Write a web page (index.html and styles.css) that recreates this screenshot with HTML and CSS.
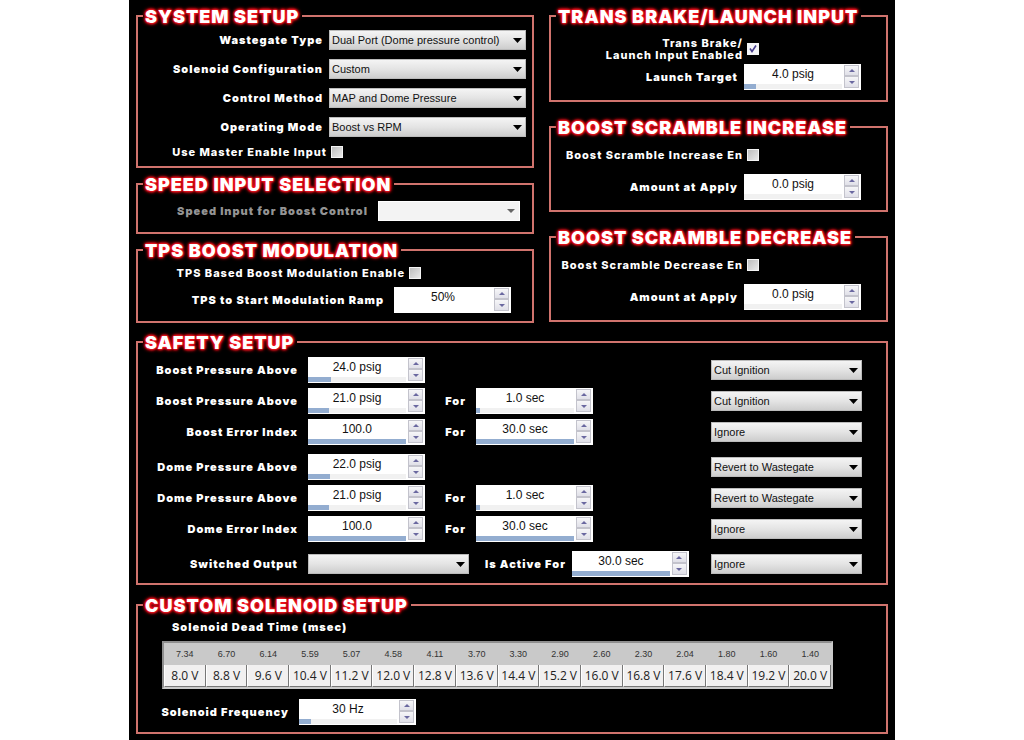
FILE: index.html
```html
<!DOCTYPE html>
<html lang="en">
<head>
  <meta charset="UTF-8">
  <meta name="viewport" content="width=device-width, initial-scale=1.0">
  <title>Boost Control Setup</title>
  <link rel="stylesheet" href="styles.css">
</head>
<body>

<main class="panel">
  <div class="columns">

    <div class="column column-left">
      <!-- System setup -->
      <fieldset class="group system">
        <legend>SYSTEM SETUP</legend>
        <div class="row">
          <label for="wastegate">Wastegate Type</label>
          <select id="wastegate"><option>Dual Port (Dome pressure control)</option></select>
        </div>
        <div class="row">
          <label for="solenoid">Solenoid Configuration</label>
          <select id="solenoid"><option>Custom</option></select>
        </div>
        <div class="row">
          <label for="method">Control Method</label>
          <select id="method"><option>MAP and Dome Pressure</option></select>
        </div>
        <div class="row">
          <label for="mode">Operating Mode</label>
          <select id="mode"><option>Boost vs RPM</option></select>
        </div>
        <div class="row check-row">
          <label for="master">Use Master Enable Input</label>
          <input type="checkbox" id="master">
        </div>
      </fieldset>

      <!-- Speed input -->
      <fieldset class="group speed">
        <legend>SPEED INPUT SELECTION</legend>
        <div class="row">
          <label for="speed">Speed Input for Boost Control</label>
          <select id="speed" disabled><option></option></select>
        </div>
      </fieldset>

      <!-- TPS -->
      <fieldset class="group tps">
        <legend>TPS BOOST MODULATION</legend>
        <div class="row check-row">
          <label for="tps-enable">TPS Based Boost Modulation Enable</label>
          <input type="checkbox" id="tps-enable">
        </div>
        <div class="row">
          <label for="tps-start">TPS to Start Modulation Ramp</label>
          <div class="spinner">
            <input type="text" id="tps-start" value="50%">
            <button type="button" class="up" aria-label="Increase"></button>
            <button type="button" class="down" aria-label="Decrease"></button>
          </div>
        </div>
      </fieldset>
    </div>

    <div class="column column-right">
      <!-- Trans brake / launch -->
      <fieldset class="group trans">
        <legend>TRANS BRAKE/LAUNCH INPUT</legend>
        <div class="row check-row">
          <label for="trans-enable">Trans Brake/<br>Launch Input Enabled</label>
          <input type="checkbox" id="trans-enable" checked>
        </div>
        <div class="row">
          <label for="launch">Launch Target</label>
          <div class="spinner">
            <input type="text" id="launch" value="4.0 psig">
            <span class="track"><span class="fill" style="width: 12%"></span></span>
            <button type="button" class="up" aria-label="Increase"></button>
            <button type="button" class="down" aria-label="Decrease"></button>
          </div>
        </div>
      </fieldset>

      <!-- Scramble increase -->
      <fieldset class="group scramble">
        <legend>BOOST SCRAMBLE INCREASE</legend>
        <div class="row check-row">
          <label for="inc-enable">Boost Scramble Increase En</label>
          <input type="checkbox" id="inc-enable">
        </div>
        <div class="row">
          <label for="inc-amount">Amount at Apply</label>
          <div class="spinner">
            <input type="text" id="inc-amount" value="0.0 psig">
            <span class="track"></span>
            <button type="button" class="up" aria-label="Increase"></button>
            <button type="button" class="down" aria-label="Decrease"></button>
          </div>
        </div>
      </fieldset>

      <!-- Scramble decrease -->
      <fieldset class="group scramble">
        <legend>BOOST SCRAMBLE DECREASE</legend>
        <div class="row check-row">
          <label for="dec-enable">Boost Scramble Decrease En</label>
          <input type="checkbox" id="dec-enable">
        </div>
        <div class="row">
          <label for="dec-amount">Amount at Apply</label>
          <div class="spinner">
            <input type="text" id="dec-amount" value="0.0 psig">
            <span class="track"></span>
            <button type="button" class="up" aria-label="Increase"></button>
            <button type="button" class="down" aria-label="Decrease"></button>
          </div>
        </div>
      </fieldset>
    </div>
  </div>

  <!-- Safety -->
  <fieldset class="group safety">
    <legend>SAFETY SETUP</legend>

    <div class="block">
      <div class="row">
        <label for="boost1">Boost Pressure Above</label>
        <div class="spinner">
          <input type="text" id="boost1" value="24.0 psig">
          <span class="track"><span class="fill" style="width: 23%"></span></span>
          <button type="button" class="up" aria-label="Increase"></button>
          <button type="button" class="down" aria-label="Decrease"></button>
        </div>
        <select class="action" aria-label="Action"><option>Cut Ignition</option></select>
      </div>
      <div class="row">
        <label for="boost2">Boost Pressure Above</label>
        <div class="spinner">
          <input type="text" id="boost2" value="21.0 psig">
          <span class="track"><span class="fill" style="width: 21%"></span></span>
          <button type="button" class="up" aria-label="Increase"></button>
          <button type="button" class="down" aria-label="Decrease"></button>
        </div>
        <label class="for" for="boost2-time">For</label>
        <div class="spinner">
          <input type="text" id="boost2-time" value="1.0 sec">
          <span class="track"><span class="fill" style="width: 4%"></span></span>
          <button type="button" class="up" aria-label="Increase"></button>
          <button type="button" class="down" aria-label="Decrease"></button>
        </div>
        <select class="action" aria-label="Action"><option>Cut Ignition</option></select>
      </div>
      <div class="row">
        <label for="boost-error">Boost Error Index</label>
        <div class="spinner">
          <input type="text" id="boost-error" value="100.0">
          <span class="track"><span class="fill" style="width: 100%"></span></span>
          <button type="button" class="up" aria-label="Increase"></button>
          <button type="button" class="down" aria-label="Decrease"></button>
        </div>
        <label class="for" for="boost-error-time">For</label>
        <div class="spinner">
          <input type="text" id="boost-error-time" value="30.0 sec">
          <span class="track"><span class="fill" style="width: 100%"></span></span>
          <button type="button" class="up" aria-label="Increase"></button>
          <button type="button" class="down" aria-label="Decrease"></button>
        </div>
        <select class="action" aria-label="Action"><option>Ignore</option></select>
      </div>
    </div>

    <div class="block">
      <div class="row">
        <label for="dome1">Dome Pressure Above</label>
        <div class="spinner">
          <input type="text" id="dome1" value="22.0 psig">
          <span class="track"><span class="fill" style="width: 22%"></span></span>
          <button type="button" class="up" aria-label="Increase"></button>
          <button type="button" class="down" aria-label="Decrease"></button>
        </div>
        <select class="action" aria-label="Action"><option>Revert to Wastegate</option></select>
      </div>
      <div class="row">
        <label for="dome2">Dome Pressure Above</label>
        <div class="spinner">
          <input type="text" id="dome2" value="21.0 psig">
          <span class="track"><span class="fill" style="width: 21%"></span></span>
          <button type="button" class="up" aria-label="Increase"></button>
          <button type="button" class="down" aria-label="Decrease"></button>
        </div>
        <label class="for" for="dome2-time">For</label>
        <div class="spinner">
          <input type="text" id="dome2-time" value="1.0 sec">
          <span class="track"><span class="fill" style="width: 4%"></span></span>
          <button type="button" class="up" aria-label="Increase"></button>
          <button type="button" class="down" aria-label="Decrease"></button>
        </div>
        <select class="action" aria-label="Action"><option>Revert to Wastegate</option></select>
      </div>
      <div class="row">
        <label for="dome-error">Dome Error Index</label>
        <div class="spinner">
          <input type="text" id="dome-error" value="100.0">
          <span class="track"><span class="fill" style="width: 100%"></span></span>
          <button type="button" class="up" aria-label="Increase"></button>
          <button type="button" class="down" aria-label="Decrease"></button>
        </div>
        <label class="for" for="dome-error-time">For</label>
        <div class="spinner">
          <input type="text" id="dome-error-time" value="30.0 sec">
          <span class="track"><span class="fill" style="width: 100%"></span></span>
          <button type="button" class="up" aria-label="Increase"></button>
          <button type="button" class="down" aria-label="Decrease"></button>
        </div>
        <select class="action" aria-label="Action"><option>Ignore</option></select>
      </div>
    </div>

    <div class="block">
      <div class="row">
        <label for="switched">Switched Output</label>
        <select id="switched" class="output"><option></option></select>
        <div class="active">
          <label for="active-time">Is Active For</label>
          <div class="spinner">
            <input type="text" id="active-time" value="30.0 sec">
            <span class="track"><span class="fill" style="width: 100%"></span></span>
            <button type="button" class="up" aria-label="Increase"></button>
            <button type="button" class="down" aria-label="Decrease"></button>
          </div>
        </div>
        <select class="action" aria-label="Action"><option>Ignore</option></select>
      </div>
    </div>
  </fieldset>

  <!-- Custom solenoid -->
  <fieldset class="group custom">
    <legend>CUSTOM SOLENOID SETUP</legend>
    <div class="table-title" id="dead-time">Solenoid Dead Time (msec)</div>
    <div class="table-wrap">
      <table aria-labelledby="dead-time">
        <tbody>
          <tr>
            <td>7.34</td><td>6.70</td><td>6.14</td><td>5.59</td>
            <td>5.07</td><td>4.58</td><td>4.11</td><td>3.70</td>
            <td>3.30</td><td>2.90</td><td>2.60</td><td>2.30</td>
            <td>2.04</td><td>1.80</td><td>1.60</td><td>1.40</td>
          </tr>
          <tr>
            <th>8.0 V</th><th>8.8 V</th><th>9.6 V</th><th>10.4 V</th>
            <th>11.2 V</th><th>12.0 V</th><th>12.8 V</th><th>13.6 V</th>
            <th>14.4 V</th><th>15.2 V</th><th>16.0 V</th><th>16.8 V</th>
            <th>17.6 V</th><th>18.4 V</th><th>19.2 V</th><th>20.0 V</th>
          </tr>
        </tbody>
      </table>
    </div>
    <div class="row">
      <label for="frequency">Solenoid Frequency</label>
      <div class="spinner">
        <input type="text" id="frequency" value="30 Hz">
        <span class="track"><span class="fill" style="width: 12%"></span></span>
        <button type="button" class="up" aria-label="Increase"></button>
        <button type="button" class="down" aria-label="Decrease"></button>
      </div>
    </div>
  </fieldset>
</main>

</body>
</html>
```
FILE: styles.css
```css
:root {
  --line: #d0736d;
  --glow: #f0141f;
  --bar: #93add0;
  --arrow: #6a68a0;
  --font-label: Inter, "Liberation Sans", sans-serif;
  --font-field: "Liberation Sans", Arial, sans-serif;
}

* {
  box-sizing: border-box;
}

body {
  margin: 0;
  background: #fff;
  font-family: var(--font-label);
  color: #fff;
}

.panel {
  max-width: 766px;
  min-height: 100vh;
  margin: 0 auto;
  padding: 5px 7px;
  background: #000;
}

/* Columns */
.columns {
  display: grid;
  grid-template-columns: 1fr 339px;
  column-gap: 15px;
  margin-bottom: 8px;
}

.column {
  display: flex;
  flex-direction: column;
}

.column-left {
  gap: 5px;
}

.column-right {
  gap: 14px;
}

/* Groups */
.group {
  min-width: 0;
  margin: 0;
  padding: 0 5px;
  border: 2px solid var(--line);
}

legend {
  padding: 2px 3px 0 2px;
  font-size: 18px;
  font-weight: 900;
  line-height: 20px;
  letter-spacing: 1px;
  text-shadow: 0 0 1px var(--glow), 0 0 2px var(--glow), 0 0 2px var(--glow),
    0 0 3px var(--glow), 0 0 3px var(--glow), 0 0 4px var(--glow),
    0 0 4px var(--glow);
}

.row {
  display: flex;
  align-items: center;
  gap: 10px;
}

.row > label {
  flex: none;
  width: var(--label);
  text-align: right;
}

label,
.table-title {
  font-size: 11px;
  font-weight: 900;
  line-height: 12px;
  letter-spacing: 1px;
  white-space: nowrap;
}

.check-row {
  gap: 4px;
}

.check-row > label {
  width: var(--check-label);
  font-weight: 800;
}

/* Selects */
select {
  appearance: none;
  height: 20px;
  margin: 0;
  padding: 0 16px 0 2px;
  border: 1px solid #bbb;
  border-radius: 0;
  background:
    url("data:image/svg+xml,%3Csvg xmlns='http://www.w3.org/2000/svg' width='9' height='5'%3E%3Cpath d='M0 0h9L4.500 5z' fill='%23000'/%3E%3C/svg%3E") no-repeat right 3px center,
    linear-gradient(#f4f4f4, #e4e4e4 50%, #cdcdcd);
  color: #111;
  font-family: var(--font-field);
  font-size: 11px;
}

select:disabled {
  border-color: #fff;
  background:
    url("data:image/svg+xml,%3Csvg xmlns='http://www.w3.org/2000/svg' width='8' height='4'%3E%3Cpath d='M0 0h8L4 4z' fill='%23666'/%3E%3C/svg%3E") no-repeat right 4px center,
    #f3f3f3;
  opacity: 1;
}

/* Checkboxes */
input[type="checkbox"] {
  appearance: none;
  flex: none;
  width: 12px;
  height: 12px;
  margin: 0;
  border: 1px solid #f4f4f4;
  background: linear-gradient(135deg, #bdbdbd, #e9e9e9);
}

input[type="checkbox"]:checked {
  background: url("data:image/svg+xml,%3Csvg xmlns='http://www.w3.org/2000/svg' width='10' height='10'%3E%3Cpath d='M2 4.500l2 3L8 1.500' fill='none' stroke='%23483f8c' stroke-width='1.600'/%3E%3C/svg%3E") center no-repeat #f4f4f8;
}

/* Spinners */
.spinner {
  flex: none;
  display: grid;
  grid-template-columns: 1fr 15px;
  grid-template-rows: 11px 12px;
  column-gap: 2px;
  width: 117px;
  height: 26px;
  padding: 1px 2px 2px 0;
  background: #fff;
  position: relative;
}

.spinner input {
  grid-row: 1 / 3;
  width: 100%;
  height: 18px;
  margin: 0;
  padding: 0;
  border: 0;
  background: none;
  color: #111;
  font-family: var(--font-field);
  font-size: 12px;
  text-align: center;
}

.spinner button {
  grid-column: 2;
  display: flex;
  align-items: center;
  justify-content: center;
  padding: 0;
  border: 1px solid #c3c3cc;
  border-radius: 0;
  background: linear-gradient(#f6f6f8, #e0e0e8);
}

.spinner .up {
  grid-row: 1;
}

.spinner .down {
  grid-row: 2;
}

.spinner button::before {
  content: "";
  border: 3px solid transparent;
}

.spinner .up::before {
  border-top: 0;
  border-bottom-color: var(--arrow);
}

.spinner .down::before {
  border-bottom: 0;
  border-top-color: var(--arrow);
}

/* level bar over the bottom of the field */
.track {
  position: absolute;
  left: 0;
  right: 19px;
  bottom: 0;
  height: 6px;
  border-bottom: 1px solid #fff;
  background: #f1f1f1;
}

.fill {
  display: block;
  height: 100%;
  background: var(--bar);
}

/* System setup */
.system {
  --label: 180px;
  --check-label: 184px;
  display: flex;
  flex-direction: column;
  gap: 9px;
  padding: 3px 6px 9px 5px;
}

.system .row {
  gap: 6px;
}

.system .check-row {
  gap: 4px;
  height: 11px;
}

.system select {
  flex: 1;
}

/* Speed input */
.speed {
  --label: 225px;
  padding: 6px 12px 11px 5px;
}

.speed label {
  color: #949494;
}

.speed select {
  flex: 1;
}

/* TPS */
.tps {
  --label: 241px;
  --check-label: 262px;
  padding-top: 6px;
  padding-bottom: 8px;
}

.tps .check-row {
  margin-bottom: 8px;
}

/* Right column */
.trans,
.scramble {
  --label: 182px;
  --check-label: 187px;
  padding-bottom: 10px;
}

.trans .row,
.scramble .row {
  gap: 6px;
}

.trans .check-row,
.scramble .check-row {
  gap: 4px;
}

.trans {
  padding-top: 10px;
}

.trans .check-row {
  margin-bottom: 3px;
}

.scramble {
  padding-top: 11px;
}

.scramble .check-row {
  margin-bottom: 13px;
}

/* Safety */
.safety {
  --label: 155px;
  display: flex;
  flex-direction: column;
  gap: 9px;
  margin-bottom: 9px;
  padding: 4px 24px 6px 5px;
}

.block {
  display: flex;
  flex-direction: column;
  gap: 5px;
}

.row > .for {
  width: 31px;
}

.action {
  width: 151px;
  margin-left: auto;
}

.output {
  width: 161px;
}

.active {
  display: flex;
  align-items: center;
  gap: 6px;
  padding-left: 6px;
}

/* Custom solenoid */
.custom {
  --label: 146px;
  padding-top: 4px;
  padding-bottom: 7px;
}

.table-title {
  padding-left: 29px;
  line-height: 14px;
}

.table-wrap {
  padding: 7px 48px 10px 19px;
}

table {
  width: 100%;
  table-layout: fixed;
  border-collapse: separate;
  border-spacing: 0;
  border: 2px solid #c9c9c9;
  border-top-color: #8f8f8f;
  border-left-color: #8f8f8f;
  background: #c9c9c9;
}

td,
th {
  height: 22px;
  padding: 0;
  text-align: center;
  white-space: nowrap;
}

td {
  color: #333;
  font-family: var(--font-field);
  font-size: 9px;
}

th {
  border-right: 1px solid #777;
  border-bottom: 1px solid #777;
  border-left: 1px solid #fff;
  background: #f1f0f0;
  color: #222;
  font-family: "Open Sans", "Noto Sans", sans-serif;
  font-size: 12px;
  font-weight: 400;
  line-height: 16px;
}
```
